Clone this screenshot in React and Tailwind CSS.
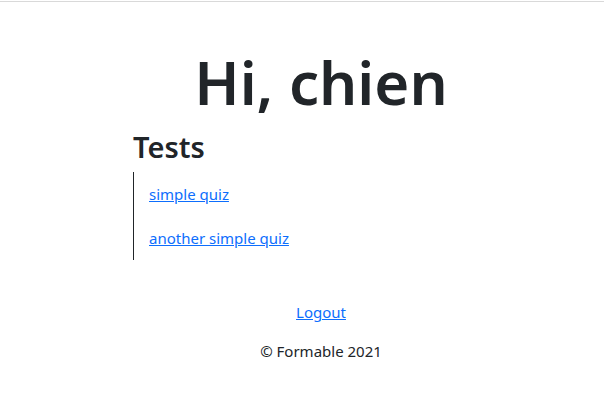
export default function App() {
  return (
    <div className="min-h-[403px] bg-white text-[#212529]" style={{ fontFamily: '"Noto Sans", "Open Sans", sans-serif' }}>
      <div className="pt-px">
        <div className="h-px bg-[#d9d9d9]" />
      </div>
      <div className="ml-[133px] w-[376px] pt-[44px]">
        <h1 className="text-center text-[60px] leading-[72px] font-semibold">Hi, chien</h1>
        <h2 className="mt-[11px] text-[29px] leading-[35px] font-semibold">Tests</h2>
        <ul className="mt-[8px] border-l border-[#212529] pl-[15px]">
          <li className="py-[10px] text-[15px] leading-[24px]">
            <a href="#" className="text-[#0d6efd] underline">simple quiz</a>
          </li>
          <li className="py-[10px] text-[15px] leading-[24px]">
            <a href="#" className="text-[#0d6efd] underline">another simple quiz</a>
          </li>
        </ul>
        <div className="mt-[40px] text-center text-[15px] leading-[24px]">
          <a href="#" className="text-[#0d6efd] underline">Logout</a>
        </div>
        <div className="mt-[15px] text-center text-[15px] leading-[24px]">© Formable 2021</div>
      </div>
    </div>
  );
}
